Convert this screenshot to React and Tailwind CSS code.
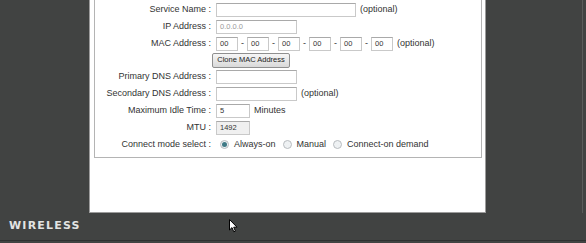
import React from 'react'

const FONT = { fontFamily: '"Liberation Sans", Arial, sans-serif' }

function Field({ w, value, muted, disabled }) {
  return (
    <div
      className={`h-[14px] border border-[#c9c9c9] border-t-[#a9a9a9] flex items-center px-[3px] text-[7.5px] ${
        disabled ? 'bg-[#f0f0f0]' : 'bg-white'
      } ${muted ? 'text-[#9a9a9a]' : 'text-[#333]'}`}
      style={{ width: w }}
    >
      {value}
    </div>
  )
}

function Row({ label, children, h = 'h-[17px]' }) {
  return (
    <div className={`flex items-center ${h}`}>
      <div className="w-[116px] shrink-0 text-right text-[#333]">{label}</div>
      <div className="flex items-center pl-[5px] gap-[4px] text-[#333]">{children}</div>
    </div>
  )
}

function Radio({ on }) {
  return (
    <span className="w-[9px] h-[9px] rounded-full border border-[#b8bcc0] bg-[#eef1f3] flex items-center justify-center">
      {on && <span className="w-[5px] h-[5px] rounded-full bg-[#3f7a86]" />}
    </span>
  )
}

export default function App() {
  const mac = ['00', '00', '00', '00', '00', '00']
  return (
    <div className="relative w-[586px] h-[243px] bg-[#414342] flex flex-col overflow-hidden" style={FONT}>
      <div className="flex h-[213px]">
        <div className="w-[89px] shrink-0" />
        <div className="w-[397px] shrink-0 bg-white border-x border-b border-[#9c9c9c] pl-[4px]">
          {/* form box */}
          <div className="w-[388px] h-[158px] border-x border-b border-[#b4b4b4] pt-[1px] text-[9px]">
            <Row label="Service Name :">
              <Field w={140} />
              <span>(optional)</span>
            </Row>
            <Row label="IP Address :">
              <Field w={81} value="0.0.0.0" muted />
            </Row>
            <Row label="MAC Address :">
              <div className="flex items-center">
                {mac.map((m, i) => (
                  <div key={i} className="flex items-center">
                    {i > 0 && <span className="w-[9px] text-center">-</span>}
                    <Field w={22} value={m} />
                  </div>
                ))}
              </div>
              <span>(optional)</span>
            </Row>
            <Row label="" h="h-[16px]">
              <button className="-ml-[4px] h-[15px] w-[78px] rounded-[2px] border border-[#8f8f8f] bg-gradient-to-b from-[#f6f6f6] to-[#d9d9d9] text-[7.5px] text-[#222]">
                Clone MAC Address
              </button>
            </Row>
            <Row label="Primary DNS Address :">
              <Field w={81} />
            </Row>
            <Row label="Secondary DNS Address :">
              <Field w={81} />
              <span>(optional)</span>
            </Row>
            <Row label="Maximum Idle Time :">
              <Field w={34} value="5" />
              <span>Minutes</span>
            </Row>
            <Row label="MTU :">
              <Field w={34} value="1492" disabled />
            </Row>
            <Row label="Connect mode select :">
              <div className="flex items-center gap-[5px] pl-[4px]">
                <Radio on />
                <span className="mr-[2px]">Always-on</span>
                <Radio />
                <span className="mr-[2px]">Manual</span>
                <Radio />
                <span>Connect-on demand</span>
              </div>
            </Row>
          </div>
        </div>
        <div className="flex-1 border-r border-[#5a5c5b] mr-[3px]" />
      </div>
      <div className="h-[28px] flex items-center pl-[9px] border-b border-[#2f3130]">
        <span
          className="text-[11px] font-bold tracking-[1.2px] text-[#e2e4e3] uppercase"
          style={{ fontFamily: '"DejaVu Sans", sans-serif' }}
        >
          Wireless
        </span>
      </div>
      {/* mouse cursor */}
      <svg className="absolute left-[229px] top-[219px]" width="9" height="14" viewBox="0 0 9 14">
        <path d="M0.5 0.5 L0.5 11 L3 8.6 L4.8 12.8 L6.4 12.1 L4.7 8.2 L8 8.2 Z" fill="#fff" stroke="#000" strokeWidth="1" />
      </svg>
    </div>
  )
}
